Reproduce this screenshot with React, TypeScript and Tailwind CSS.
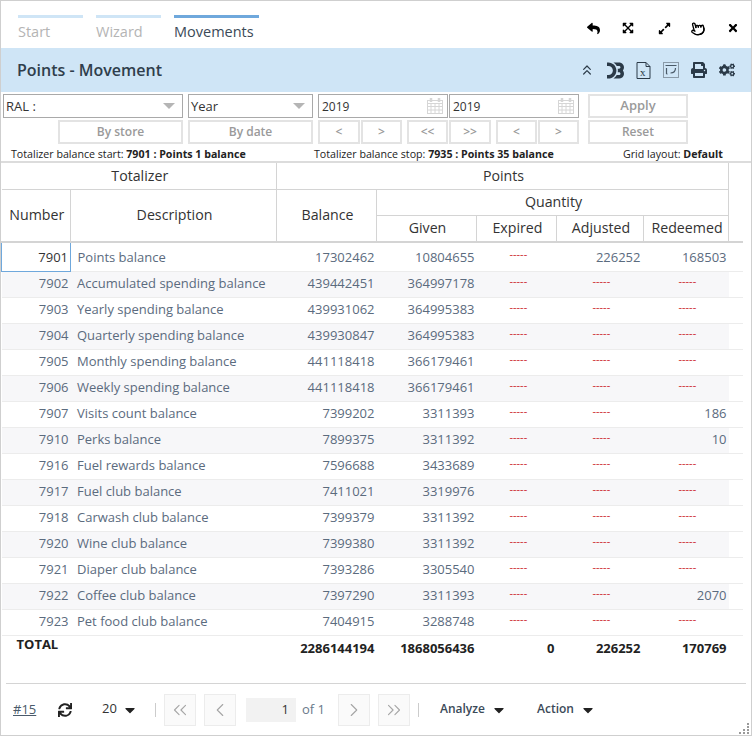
import React from "react";
import { FaReply, FaExpandArrowsAlt, FaExpandAlt, FaTimes, FaPrint, FaCogs, FaSync, FaCaretDown } from "react-icons/fa";
import { SiD3Dotjs } from "react-icons/si";
import { ChevronsUp, ChevronsLeft, ChevronsRight, ChevronLeft, ChevronRight, Pointer } from "lucide-react";

const rows: [string, string, string, string, string, string, string][] = [
  ["7901", "Points balance", "17302462", "10804655", "", "226252", "168503"],
  ["7902", "Accumulated spending balance", "439442451", "364997178", "", "", ""],
  ["7903", "Yearly spending balance", "439931062", "364995383", "", "", ""],
  ["7904", "Quarterly spending balance", "439930847", "364995383", "", "", ""],
  ["7905", "Monthly spending balance", "441118418", "366179461", "", "", ""],
  ["7906", "Weekly spending balance", "441118418", "366179461", "", "", ""],
  ["7907", "Visits count balance", "7399202", "3311393", "", "", "186"],
  ["7910", "Perks balance", "7899375", "3311392", "", "", "10"],
  ["7916", "Fuel rewards balance", "7596688", "3433689", "", "", ""],
  ["7917", "Fuel club balance", "7411021", "3319976", "", "", ""],
  ["7918", "Carwash club balance", "7399379", "3311392", "", "", ""],
  ["7920", "Wine club balance", "7399380", "3311392", "", "", ""],
  ["7921", "Diaper club balance", "7393286", "3305540", "", "", ""],
  ["7922", "Coffee club balance", "7397290", "3311393", "", "", "2070"],
  ["7923", "Pet food club balance", "7404915", "3288748", "", "", ""],
];

function Btn({ w, children, big }: { w: string; children: React.ReactNode; big?: boolean }) {
  return (
    <div className={`${w} h-6 border-2 border-[#e3e3e3] flex items-center justify-center font-semibold text-[#9a9a9a] ${big ? "text-[13px]" : "text-[12px]"}`}>
      {children}
    </div>
  );
}

function Sel({ w, label }: { w: string; label: string }) {
  return (
    <div className={`${w} h-6 border border-[#a9a9a9] flex items-center justify-between pl-[2px] pr-[7px] text-[13px] text-[#333]`}>
      <span className="pt-px">{label}</span>
      <span className="w-0 h-0 border-l-[6px] border-r-[6px] border-t-[6px] border-l-transparent border-r-transparent border-t-[#b5b5b5]" />
    </div>
  );
}

function Calendar() {
  return (
    <svg width="16" height="16" viewBox="0 0 16 16" fill="none" stroke="#d6d6d6" strokeWidth="1">
      <rect x=".5" y="2.5" width="15" height="13" />
      <path d="M.5 5.5h15M.5 8.5h15M.5 12h15M4 5.5v10M8 5.5v10M12 5.5v10" />
      <path d="M4 0v4M12 0v4" strokeWidth="2.5" />
    </svg>
  );
}

function DateBox({ w }: { w: string }) {
  return (
    <div className={`${w} h-6 border border-[#a9a9a9] flex items-center justify-between pl-[3px] pr-[4px] text-[12px] text-[#333]`}>
      <span className="pt-px">2019</span>
      <Calendar />
    </div>
  );
}

function PageBtn({ children }: { children: React.ReactNode }) {
  return (
    <div className="w-8 h-8 border border-[#ececec] bg-[#fafafa] flex items-center justify-center text-[#a5a5a5]">
      {children}
    </div>
  );
}

function Dash() {
  return <span className="text-[#cc1f2d] text-[11px] leading-none relative -top-[3px]">-----</span>;
}

export default function App() {
  const th = "border-r border-b-2 border-[#d4d4d4] font-normal text-[14.2px] text-[#333] text-center p-0 pl-[2px] pb-[2px]";
  const thThin = "border-r border-b border-[#d4d4d4] font-normal text-[14.2px] text-[#333] p-0 pl-[2px]";
  const tab = "border-t-[3px] text-[14.5px] leading-[28px] h-[30px]";
  return (
    <div className="w-[752px] h-[736px] border border-[#cfcfcf] bg-white flex flex-col overflow-hidden text-[#333] relative" style={{ fontFamily: '"Open Sans", sans-serif' }}>
      <div className="h-[47px] flex justify-between shrink-0 pl-[17px] pr-[12px]">
        <div className="flex gap-[13px] pt-[14px]">
          <div className={`w-[65px] border-[#cfe5f6] text-[#b4b4b4] ${tab}`}>Start</div>
          <div className={`w-[65px] border-[#cfe5f6] text-[#b4b4b4] ${tab}`}>Wizard</div>
          <div className={`w-[85px] border-[#6fa8dc] text-[#3b4a58] ${tab}`}>Movements</div>
        </div>
        <div className="flex items-center text-black pt-[7px]">
          <FaReply className="text-[13px]" />
          <FaExpandArrowsAlt className="text-[12px] ml-[22px]" />
          <FaExpandAlt className="text-[13px] ml-[24px]" />
          <Pointer size={15} strokeWidth={2.2} className="ml-[19px] -rotate-[15deg]" />
          <FaTimes className="text-[12px] ml-[22px]" />
        </div>
      </div>
      <div className="h-[44px] bg-[#cfe5f6] flex items-center justify-between pl-4 pr-4 shrink-0">
        <div className="text-[16px] font-semibold text-[#2f3e4c]">Points - Movement</div>
        <div className="flex items-center text-[#2b3a48]">
          <ChevronsUp size={16} strokeWidth={1.8} />
          <SiD3Dotjs className="text-[17px] ml-[12px]" />
          <svg className="ml-[12px]" width="15" height="17" viewBox="0 0 15 17" fill="none" stroke="#2b3a48" strokeWidth="1">
            <path d="M1 .5h9l4 4v12H1z" />
            <path d="M10 .5v4h4" />
            <text x="4" y="14" fontSize="11" fontFamily="Liberation Serif" fill="#2b3a48" stroke="none">x</text>
          </svg>
          <svg className="ml-[12px]" width="16" height="16" viewBox="0 0 16 16" fill="none" stroke="#4a5a68" strokeWidth="1">
            <rect x=".5" y=".5" width="15" height="15" stroke="#8a9aa8" />
            <path d="M2.5 3.5h11M3.5 6v6M3.5 12h1M12.5 6c0 3-1 5-5 5" strokeWidth="1.2" />
          </svg>
          <FaPrint className="text-[16px] ml-[12px]" />
          <FaCogs className="text-[16px] ml-[12px]" />
        </div>
      </div>
      <div className="shrink-0 flex flex-col gap-[2px] pt-[2px] pl-[2px]">
        <div className="flex">
          <Sel w="w-[180px]" label="RAL :" />
          <Sel w="w-[125px] ml-[5px]" label="Year" />
          <DateBox w="w-[130px] ml-[5px]" />
          <DateBox w="w-[130px] ml-[1px]" />
          <Btn w="w-[100px] ml-[9px]" big>Apply</Btn>
        </div>
        <div className="flex">
          <Btn w="w-[125px] ml-[55px]">By store</Btn>
          <Btn w="w-[125px] ml-[5px]">By date</Btn>
          <Btn w="w-[42px] ml-[5px]">&lt;</Btn>
          <Btn w="w-[41px] ml-[1px]">&gt;</Btn>
          <Btn w="w-[41px] ml-[5px]">&lt;&lt;</Btn>
          <Btn w="w-[42px] ml-[1px]">&gt;&gt;</Btn>
          <Btn w="w-[41px] ml-[5px]">&lt;</Btn>
          <Btn w="w-[41px] ml-[1px]">&gt;</Btn>
          <Btn w="w-[100px] ml-[9px]">Reset</Btn>
        </div>
      </div>
      <div className="shrink-0 h-[15px] mt-[2px] flex text-[10.65px] text-[#222] leading-[17px] pl-[10px] whitespace-nowrap">
        <div className="w-[303px]">Totalizer balance start: <b>7901 : Points 1 balance</b></div>
        <div className="w-[309px]">Totalizer balance stop: <b>7935 : Points 35 balance</b></div>
        <div>Grid layout: <b>Default</b></div>
      </div>
      <div className="shrink-0 border-t-2 border-[#dcdcdc]">
        <table className="border-collapse table-fixed w-[741px]">
          <colgroup>
            <col className="w-[69px]" /><col className="w-[206px]" /><col className="w-[100px]" /><col className="w-[100px]" /><col className="w-[80px]" /><col className="w-[87px]" /><col className="w-[85px]" /><col className="w-[14px]" />
          </colgroup>
          <thead>
            <tr className="h-[26px]">
              <th colSpan={2} className={thThin}>Totalizer</th>
              <th colSpan={5} className={thThin}>Points</th>
              <th rowSpan={3} className="border-b-2 border-[#d4d4d4] p-0" />
            </tr>
            <tr className="h-[26px]">
              <th rowSpan={2} className={th}>Number</th>
              <th rowSpan={2} className={th}>Description</th>
              <th rowSpan={2} className={th}>Balance</th>
              <th colSpan={4} className={thThin}>Quantity</th>
            </tr>
            <tr className="h-[27px]">
              <th className={th}>Given</th>
              <th className={th}>Expired</th>
              <th className={th}>Adjusted</th>
              <th className={th}>Redeemed</th>
            </tr>
          </thead>
          <tbody>
            {rows.map((r, i) => (
              <tr key={r[0]} className={`${i === 0 ? "h-[29px]" : "h-[26px]"} border-b border-[#ececec] text-[13px] text-[#5b6b7e] ${i % 2 ? "bg-[#f7f7f9]" : "bg-white"}`}>
                <td className={`text-right pr-[2px] p-0 ${i === 0 ? "border border-[#6fa8dc] text-[#333] pt-[2px]" : ""}`}>{r[0]}</td>
                <td className={`pl-[6.5px] p-0 whitespace-nowrap ${i === 0 ? "pt-[2px]" : ""}`}>{r[1]}</td>
                <td className={`text-right pr-[2px] p-0 ${i === 0 ? "pt-[2px]" : ""}`}>{r[2]}</td>
                <td className={`text-right pr-[2px] p-0 ${i === 0 ? "pt-[2px]" : ""}`}>{r[3]}</td>
                <td className="text-left pl-[33px] p-0"><Dash /></td>
                <td className={r[5] ? "text-right pr-[3px] p-0 pt-[2px]" : "text-left pl-[36px] p-0"}>{r[5] || <Dash />}</td>
                <td className={r[6] ? `text-right pr-[2px] p-0 ${i === 0 ? "pt-[2px]" : ""}` : "text-left pl-[35px] p-0"}>{r[6] || <Dash />}</td>
              </tr>
            ))}
            <tr className="h-[26px] text-[13px] font-bold text-[#222]">
              <td colSpan={2} className="p-0 pl-[15px] align-top leading-[17px]">TOTAL</td>
              <td className="text-right pr-[2px] p-0">2286144194</td>
              <td className="text-right pr-[2px] p-0">1868056436</td>
              <td className="text-right pr-[2px] p-0">0</td>
              <td className="text-right pr-[3px] p-0">226252</td>
              <td className="text-right pr-[2px] p-0">170769</td>
            </tr>
          </tbody>
        </table>
      </div>
      <div className="mt-auto mb-[8px] ml-[5px] mr-[5px] border-t border-[#d4d4d4] h-[44px] flex items-center text-[13px] text-[#333] pt-[8px] shrink-0">
        <span className="underline text-[#4a5a6a] ml-[7px] w-[38px]">#15</span>
        <FaSync className="text-[14px] text-[#222] ml-[7px]" />
        <span className="ml-[30px] w-[19px] pb-[2px]">20</span>
        <FaCaretDown className="text-[16px] text-[#222] ml-[1px]" />
        <span className="w-px h-[14px] bg-[#ccc] ml-[17px]" />
        <div className="ml-[8px] flex gap-2 items-center">
          <PageBtn><ChevronsLeft size={22} strokeWidth={1.2} /></PageBtn>
          <PageBtn><ChevronLeft size={22} strokeWidth={1.2} /></PageBtn>
          <div className="w-[50px] h-6 bg-[#f2f2f2] flex items-center justify-end pr-[7px] ml-[2px]">1</div>
        </div>
        <span className="ml-[6px] w-[21px] text-[#6a7a8a] whitespace-nowrap">of 1</span>
        <div className="ml-[15px] flex gap-2">
          <PageBtn><ChevronRight size={22} strokeWidth={1.2} /></PageBtn>
          <PageBtn><ChevronsRight size={22} strokeWidth={1.2} /></PageBtn>
        </div>
        <span className="w-px h-[14px] bg-[#ccc] ml-2" />
        <span className="ml-[21px] w-[44px] text-[12px] font-semibold text-[#3b4a58] pb-[2px] whitespace-nowrap">Analyze</span>
        <FaCaretDown className="text-[16px] text-[#222] ml-[7px]" />
        <span className="ml-[30px] w-[37px] text-[12px] font-semibold text-[#3b4a58] pb-[2px] whitespace-nowrap">Action</span>
        <FaCaretDown className="text-[16px] text-[#222] ml-[6px]" />
      </div>
      <svg className="absolute right-0 bottom-0" width="12" height="12" viewBox="0 0 12 12" fill="#9a9a9a">
        <rect x="8" y="0" width="2" height="2" /><rect x="8" y="3" width="2" height="2" /><rect x="4" y="6" width="2" height="2" /><rect x="8" y="6" width="2" height="2" /><rect x="0" y="9" width="2" height="2" /><rect x="4" y="9" width="2" height="2" /><rect x="8" y="9" width="2" height="2" />
      </svg>
    </div>
  );
}
